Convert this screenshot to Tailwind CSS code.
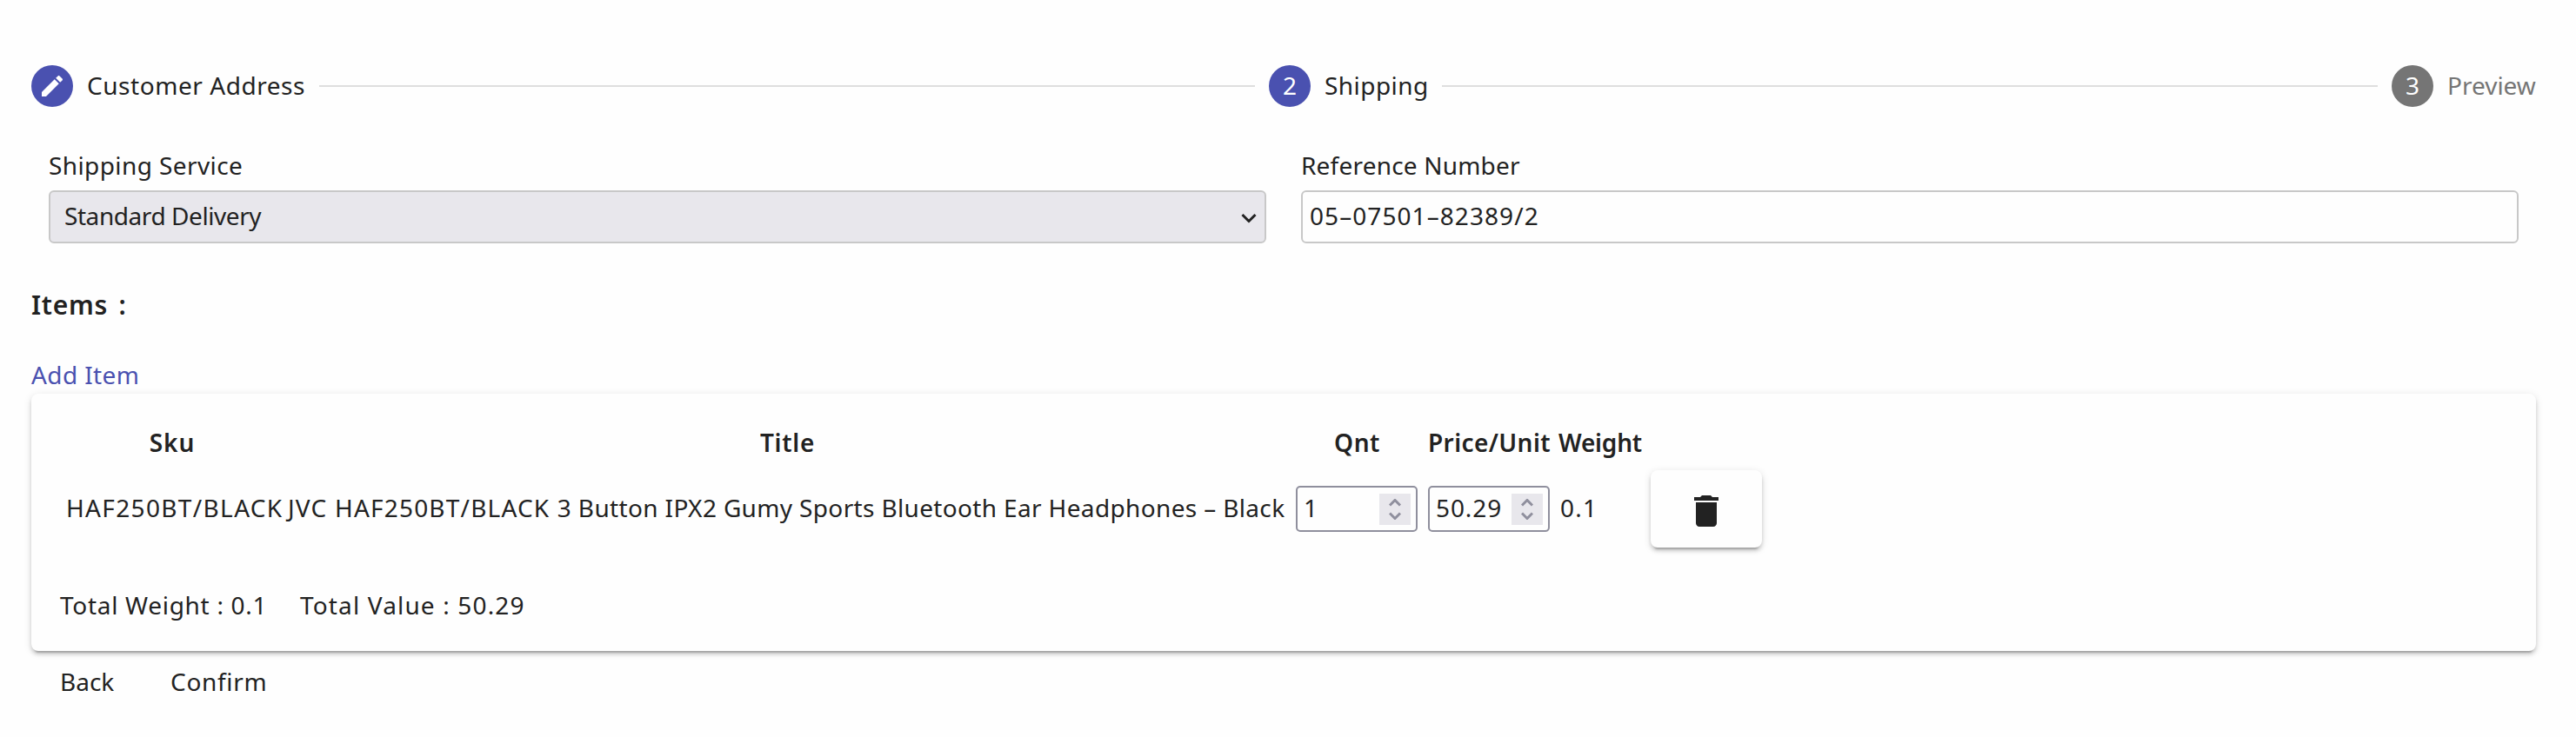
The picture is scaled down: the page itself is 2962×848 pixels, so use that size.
<!DOCTYPE html>
<html lang="en">
  <head>
    <meta charset="UTF-8" />
    <meta name="viewport" content="width=device-width, initial-scale=1.0" />
    <title>Create Shipment</title>
    <script src="https://cdn.jsdelivr.net/npm/@tailwindcss/browser@4"></script>
  </head>
  <body class="bg-[#fefefe] text-[#222222] font-['Noto_Sans',sans-serif] text-[28px] leading-10 whitespace-nowrap">
    <div class="pl-9 pr-[46px] pt-[75px]">
      <!-- Stepper -->
      <div class="flex items-center h-12">
        <div class="w-12 h-12 rounded-full bg-[#4a51b0] text-white flex items-center justify-center">
          <svg class="w-8 h-8" viewBox="0 0 24 24" fill="currentColor">
            <path d="M3 17.25V21h3.75L17.81 9.94l-3.75-3.75L3 17.25zM20.71 7.04c.39-.39.39-1.02 0-1.41l-2.34-2.34c-.39-.39-1.02-.39-1.41 0l-1.83 1.83 3.75 3.75 1.83-1.83z" />
          </svg>
        </div>
        <span class="w-[267px] pl-4 pb-0.5 tracking-[0.55px]">Customer Address</span>
        <div class="flex-1 h-0.5 mx-4 bg-[#dedede]"></div>
        <div class="w-12 h-12 pb-0.5 rounded-full bg-[#4a51b0] text-white flex items-center justify-center">2</div>
        <span class="w-[135px] pl-4 pb-0.5 tracking-[0.45px]">Shipping</span>
        <div class="flex-1 h-0.5 mx-4 bg-[#dedede]"></div>
        <div class="w-12 h-12 pb-0.5 rounded-full bg-[#757575] text-white flex items-center justify-center">3</div>
        <span class="w-[118px] pl-4 pb-0.5 text-[#757575]">Preview</span>
      </div>

      <!-- Shipping details -->
      <div class="grid grid-cols-2 gap-10 mt-[47px] px-5">
        <div>
          <label class="block mb-[9px] tracking-[0.4px]">Shipping Service</label>
          <div class="flex items-center justify-between h-[61px] pl-4 pr-[9px] border-2 border-[#c8c8c8] rounded-md bg-[#e8e7ec]">
            <span class="pb-1 tracking-[-0.43px]">Standard Delivery</span>
            <svg class="w-[18px] h-3 mt-0.5" viewBox="0 0 18 12" fill="none" stroke="currentColor" stroke-width="3">
              <path d="M1.5 2L9 9.5 16.5 2" />
            </svg>
          </div>
        </div>
        <div>
          <label class="block mb-[9px] tracking-[0.2px]">Reference Number</label>
          <input
            type="text"
            value="05–07501–82389/2"
            class="block w-full h-[61px] pl-2 pb-1 border-2 border-[#c8c8c8] rounded-md tracking-[1.07px]"
          />
        </div>
      </div>

      <h3 class="mt-[51px] text-[30px] leading-10 font-semibold tracking-[0.7px] [word-spacing:4px]">Items :</h3>
      <a href="#" class="block w-fit mt-10 mb-0.5 text-[#4a51b0] tracking-[0.4px]">Add Item</a>

      <!-- Items card -->
      <div class="h-[296px] pt-9 rounded-lg bg-[#fefefe] shadow-[0_6px_2px_-4px_rgba(0,0,0,0.2),0_4px_4px_0_rgba(0,0,0,0.14),0_2px_10px_0_rgba(0,0,0,0.12)]">
        <div class="grid grid-cols-[246px_1150px_140px_142px_96px_128px] gap-x-2.5 pl-[38px] font-semibold text-center">
          <span class="pl-0.5 tracking-[1px]">Sku</span>
          <span class="pl-px tracking-[0.7px]">Title</span>
          <span class="pl-px tracking-[0.5px]">Qnt</span>
          <span class="pl-0.5 tracking-[0.4px]">Price/Unit</span>
          <span class="tracking-[-0.2px]">Weight</span>
        </div>
        <div class="grid grid-cols-[246px_1150px_140px_142px_96px_128px] gap-x-2.5 items-center h-[89px] mt-3 pl-[38px]">
          <span class="pl-0.5 pb-[3px] tracking-[1.35px]">HAF250BT/BLACK</span>
          <span class="pl-px pb-[3px] tracking-[0.35px]"><span class="tracking-[1.2px]">JVC HAF250BT/BLACK </span>3 Button IPX2 Gumy Sports Bluetooth Ear Headphones – Black</span>
          <div class="flex items-center justify-between w-[140px] h-[53px] pl-[7px] pr-1.5 border-2 border-[#8f8f9d] rounded-[5px]">
            <span class="pb-1">1</span>
            <div class="flex items-center justify-center w-9 h-9 bg-[#e8e7ec]">
              <svg class="w-3.5 h-6" viewBox="0 0 14 24" fill="none" stroke="#8f8f9d" stroke-width="3">
                <path d="M1 7.5l6-6 6 6M1 16.5l6 6 6-6" />
              </svg>
            </div>
          </div>
          <div class="flex items-center justify-between w-[140px] h-[53px] ml-0.5 pl-[7px] pr-1.5 border-2 border-[#8f8f9d] rounded-[5px]">
            <span class="pb-1 tracking-[0.9px]">50.29</span>
            <div class="flex items-center justify-center w-9 h-9 bg-[#e8e7ec]">
              <svg class="w-3.5 h-6" viewBox="0 0 14 24" fill="none" stroke="#8f8f9d" stroke-width="3">
                <path d="M1 7.5l6-6 6 6M1 16.5l6 6 6-6" />
              </svg>
            </div>
          </div>
          <span class="pl-0.5 pb-[3px] tracking-[1.3px]">0.1</span>
          <button class="flex items-center justify-center w-32 h-[89px] pt-1 rounded-lg bg-[#fefefe] shadow-[0_6px_2px_-4px_rgba(0,0,0,0.2),0_4px_4px_0_rgba(0,0,0,0.14),0_2px_10px_0_rgba(0,0,0,0.12)]">
            <svg class="w-12 h-12" viewBox="0 0 24 24" fill="currentColor">
              <path d="M6 19c0 1.1.9 2 2 2h8c1.1 0 2-.9 2-2V7H6v12zM19 4h-3.5l-1-1h-5l-1 1H5v2h14V4z" />
            </svg>
          </button>
        </div>
        <div class="flex mt-[46px] pl-[33px]">
          <span class="w-[276px] tracking-[0.7px]">Total Weight : 0.1</span>
          <span class="tracking-[1.15px]">Total Value : 50.29</span>
        </div>
      </div>

      <div class="flex mt-[15px] pl-[33px]">
        <button class="w-[127px] text-left">Back</button>
        <button class="tracking-[0.7px]">Confirm</button>
      </div>
    </div>
  </body>
</html>
